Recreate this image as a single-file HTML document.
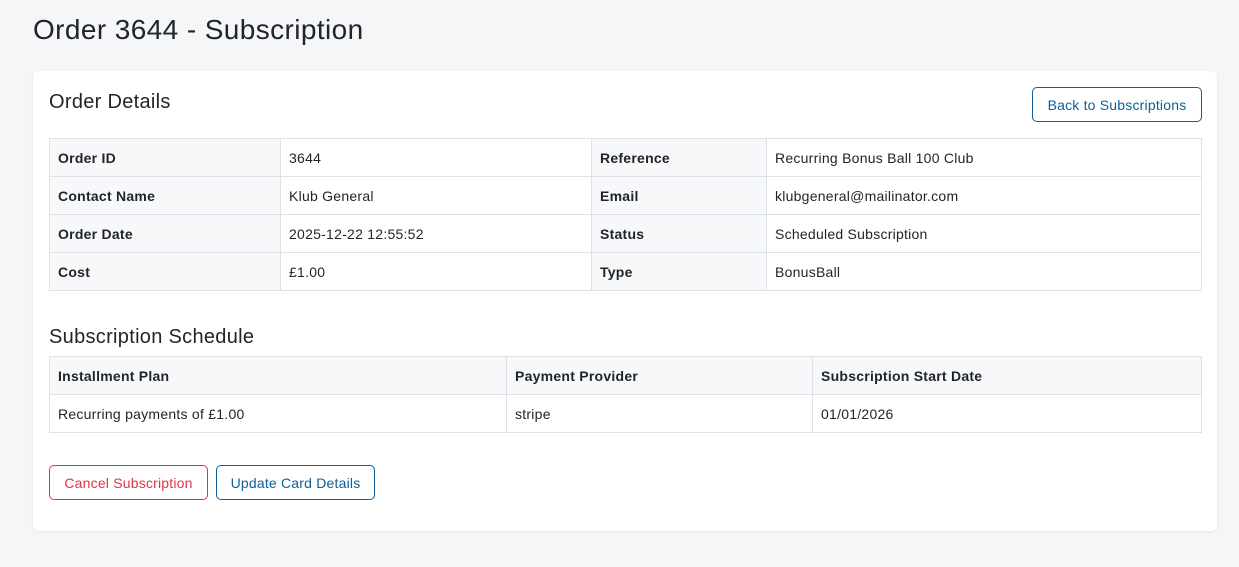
<!DOCTYPE html>
<html><head><style>
*{box-sizing:border-box;margin:0;padding:0}
body{width:1239px;height:567px;background:#f5f6f8;font-family:"Liberation Sans",sans-serif;color:#212529;position:relative;overflow:hidden}
h1{position:absolute;left:33px;top:14px;font-size:28px;font-weight:400;color:#212529;letter-spacing:0.4px}
.card{position:absolute;left:33px;top:71px;width:1184px;height:460px;background:#fff;border-radius:6px;box-shadow:0 1px 3px rgba(0,0,0,.08)}
h2{position:absolute;font-size:20px;font-weight:400;color:#212529;letter-spacing:0.3px}
table{position:absolute;border-collapse:collapse;font-size:14px;left:49px;width:1153px;letter-spacing:0.25px}
td,th{border:1px solid #dee2e6;height:38px;padding:0 8px;text-align:left;vertical-align:middle}
th{background:#f7f8fa;font-weight:700}
.btn{position:absolute;height:35px;border:1px solid;border-radius:5px;font-size:14px;display:flex;align-items:center;justify-content:center;background:#fff;letter-spacing:0.2px}
.blue{color:#0d5f96;border-color:#0d5f96}
.red{color:#dc3545;border-color:#dc3545}
</style></head><body>
<h1>Order 3644 - Subscription</h1>
<div class="card"></div>
<h2 style="left:49px;top:91px">Order Details</h2>
<div class="btn blue" style="left:1032px;top:87px;width:170px">Back to Subscriptions</div>
<table style="top:138px">
<colgroup><col style="width:231px"><col style="width:311px"><col style="width:175px"><col></colgroup>
<tr><th>Order ID</th><td>3644</td><th>Reference</th><td>Recurring Bonus Ball 100 Club</td></tr>
<tr><th>Contact Name</th><td>Klub General</td><th>Email</th><td>klubgeneral@mailinator.com</td></tr>
<tr><th>Order Date</th><td>2025-12-22 12:55:52</td><th>Status</th><td>Scheduled Subscription</td></tr>
<tr><th>Cost</th><td>£1.00</td><th>Type</th><td>BonusBall</td></tr>
</table>
<h2 style="left:49px;top:326px">Subscription Schedule</h2>
<table style="top:356px">
<colgroup><col style="width:457px"><col style="width:306px"><col></colgroup>
<tr><th>Installment Plan</th><th>Payment Provider</th><th>Subscription Start Date</th></tr>
<tr><td>Recurring payments of £1.00</td><td>stripe</td><td>01/01/2026</td></tr>
</table>
<div class="btn red" style="left:49px;top:465px;width:159px">Cancel Subscription</div>
<div class="btn blue" style="left:216px;top:465px;width:159px">Update Card Details</div>
</body></html>
